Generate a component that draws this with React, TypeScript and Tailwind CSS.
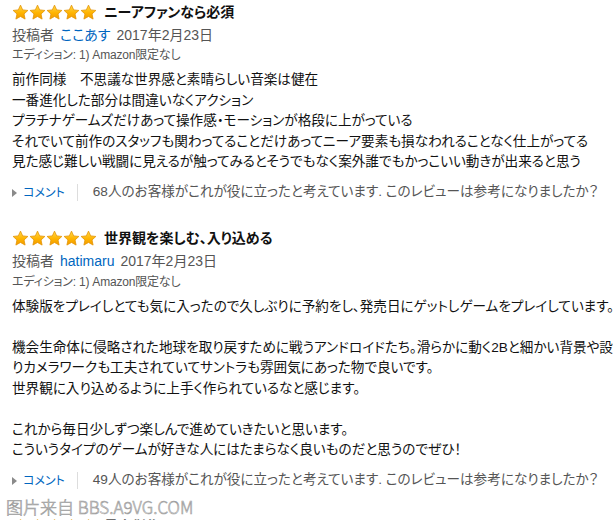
import React from "react";

type Review = {
  title: string;
  author: string;
  date: string;
  edition: string;
  body: string[];
  helpful: number;
};

const reviews: Review[] = [
  {
    title: "ニーアファンなら必須",
    author: "ここあす",
    date: "2017年2月23日",
    edition: "1) Amazon限定なし",
    body: [
      "前作同様　不思議な世界感と素晴らしい音楽は健在",
      "一番進化した部分は間違いなくアクション",
      "プラチナゲームズだけあって操作感・モーションが格段に上がっている",
      "それでいて前作のスタッフも関わってることだけあってニーア要素も損なわれることなく仕上がってる",
      "見た感じ難しい戦闘に見えるが触ってみるとそうでもなく案外誰でもかっこいい動きが出来ると思う",
    ],
    helpful: 68,
  },
  {
    title: "世界観を楽しむ、入り込める",
    author: "hatimaru",
    date: "2017年2月23日",
    edition: "1) Amazon限定なし",
    body: [
      "体験版をプレイしとても気に入ったので久しぶりに予約をし、発売日にゲットしゲームをプレイしています。",
      "",
      "機会生命体に侵略された地球を取り戻すために戦うアンドロイドたち。滑らかに動く2Bと細かい背景や設",
      "りカメラワークも工夫されていてサントラも雰囲気にあった物で良いです。",
      "世界観に入り込めるように上手く作られているなと感じます。",
      "",
      "これから毎日少しずつ楽しんで進めていきたいと思います。",
      "こういうタイプのゲームが好きな人にはたまらなく良いものだと思うのでぜひ！",
    ],
    helpful: 49,
  },
];

function Star() {
  return (
    <svg width="17" height="17" viewBox="0 0 24 24" aria-hidden>
      <defs>
        <linearGradient id="starfill" x1="0" y1="0" x2="0" y2="1">
          <stop offset="0" stopColor="#ffd84a" />
          <stop offset="0.55" stopColor="#ffb400" />
          <stop offset="1" stopColor="#f19a00" />
        </linearGradient>
      </defs>
      <path
        d="M12 1.6l3.1 6.7 7.3.8-5.4 5 1.5 7.2L12 17.6l-6.5 3.7 1.5-7.2-5.4-5 7.3-.8z"
        fill="url(#starfill)"
        stroke="#e39100"
        strokeWidth="1.1"
        strokeLinejoin="round"
      />
    </svg>
  );
}

function Stars() {
  return (
    <div className="flex w-[86px] shrink-0">
      {[0, 1, 2, 3, 4].map((i) => (
        <Star key={i} />
      ))}
    </div>
  );
}

function ReviewBlock({ r, last }: { r: Review; last?: boolean }) {
  return (
    <div className={last ? "" : "mb-[26px]"}>
      <div className="flex h-[20px] items-center gap-[6px]">
        <Stars />
        <span className="text-[14px] font-bold text-[#111]">{r.title}</span>
      </div>
      <div className="mt-[3px] flex h-[20px] items-center text-[14px] text-[#555]">
        <span>投稿者</span>
        <span className="ml-[6px] text-[#0066c0]">{r.author}</span>
        <span className="ml-[6px]">{r.date}</span>
      </div>
      <div className="mt-[2px] h-[16px] text-[12px] leading-[16px] tracking-[-0.2px] text-[#555]">
        エディション: {r.edition}
      </div>
      <div className="mt-[7px] whitespace-nowrap text-[13.6px] leading-[20.5px] text-[#111]">
        {r.body.map((line, i) => (
          <div key={i} className="h-[20.5px]">
            {line}
          </div>
        ))}
      </div>
      <div className="mt-[10px] flex h-[20px] items-center whitespace-nowrap">
        <span className="h-0 w-0 border-y-[4px] border-l-[5px] border-y-transparent border-l-[#8a8a8a]" />
        <span className="ml-[6px] text-[12px] text-[#0066c0]">コメント</span>
        <span className="ml-[12px] h-[17px] border-l border-[#dddddd]" />
        <span className="ml-[15px] text-[13.6px] text-[#555]">
          {r.helpful}人のお客様がこれが役に立ったと考えています. このレビューは参考になりましたか？
        </span>
      </div>
    </div>
  );
}

export default function App() {
  return (
    <div className="relative h-[520px] w-[616px] overflow-hidden bg-white font-['Liberation_Sans','Noto_Sans_CJK_JP',sans-serif] [font-feature-settings:'palt']">
      <div className="pl-3 pt-[2px]">
        {reviews.map((r) => (
          <ReviewBlock key={r.title} r={r} />
        ))}
        <div className="flex h-[20px] items-center gap-[6px] opacity-60">
          <Stars />
          <span className="text-[14px] font-bold text-[#111]">最高傑作</span>
        </div>
      </div>
      <div className="absolute bottom-[3px] left-[6px] font-['Noto_Sans_CJK_SC',sans-serif] text-[17px] font-light leading-[20px] text-[#e8e8e8] [-webkit-text-stroke:0.6px_#9c9c9c]">
        图片来自 BBS.A9VG.COM
      </div>
    </div>
  );
}
